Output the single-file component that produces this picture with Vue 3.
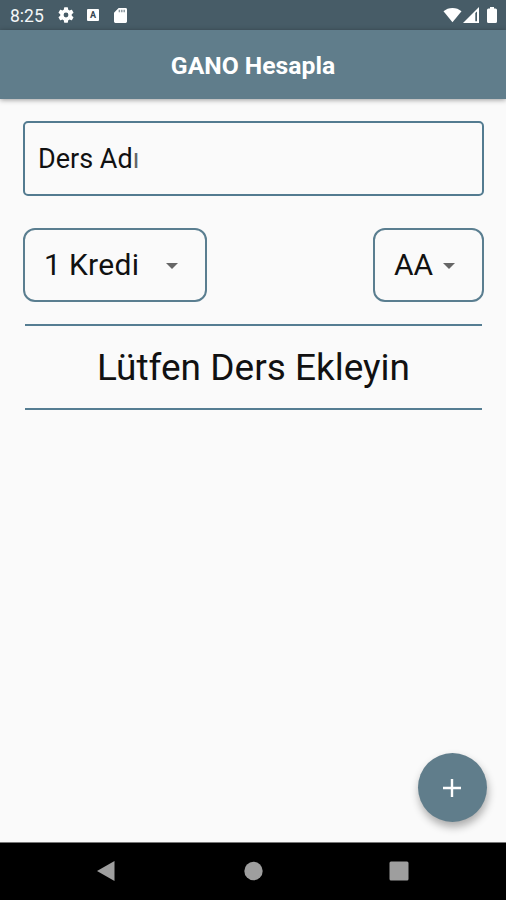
<script setup>
const credit = '1 Kredi'
const grade = 'AA'
</script>

<template>
  <div class="screen">
    <header class="status">
      <span class="time">8:25</span>
      <svg class="gear" viewBox="2 2 20 20"><path fill-rule="evenodd" d="M19.14 12.94c.04-.3.06-.61.06-.94 0-.32-.02-.64-.07-.94l2.03-1.58a.49.49 0 0 0 .12-.61l-1.92-3.32a.49.49 0 0 0-.59-.22l-2.39.96c-.5-.38-1.03-.7-1.62-.94l-.36-2.54a.48.48 0 0 0-.48-.41h-3.84a.48.48 0 0 0-.47.41l-.36 2.54c-.59.24-1.13.57-1.62.94l-2.39-.96a.48.48 0 0 0-.59.22L2.74 8.87a.48.48 0 0 0 .12.61l2.03 1.58c-.05.3-.09.63-.09.94s.02.64.07.94l-2.03 1.58a.49.49 0 0 0-.12.61l1.92 3.32c.12.22.37.29.59.22l2.39-.96c.5.38 1.03.7 1.62.94l.36 2.54c.05.24.24.41.48.41h3.84c.24 0 .44-.17.47-.41l.36-2.54c.59-.24 1.13-.56 1.62-.94l2.39.96c.22.08.47 0 .59-.22l1.92-3.32a.48.48 0 0 0-.12-.61zM12 15a3 3 0 1 1 0-6 3 3 0 0 1 0 6z" /></svg>
      <span class="badge">A</span>
      <svg class="sd" viewBox="0 0 14 16"><path fill-rule="evenodd" d="M5 0h7.500a1.500 1.500 0 0 1 1.500 1.500v13a1.500 1.500 0 0 1-1.500 1.500h-11A1.500 1.500 0 0 1 0 14.500V5z" /><path class="pins" d="M5 1.800h1.600v2.600H5zM7.600 1.800h1.600v2.600H7.600zM10.200 1.800h1.600v2.600h-1.600z" /></svg>
      <span class="spacer"></span>
      <svg class="wifi" viewBox="0 0 20 16"><path d="M10 15.500 .5 4C3 1.700 6.500.500 10 .500s7 1.200 9.500 3.500z" /></svg>
      <svg class="signal" viewBox="0 0 16 16"><path fill-rule="evenodd" d="M16 0v16H0zM12.300 6v8.300h1.700V4.400z" /></svg>
      <svg class="battery" viewBox="0 0 10 16"><path d="M3 0h4v1.500h1.500A1.500 1.500 0 0 1 10 3v11.500A1.500 1.500 0 0 1 8.500 16h-7A1.500 1.500 0 0 1 0 14.500V3a1.500 1.500 0 0 1 1.500-1.500H3z" /></svg>
    </header>
    <div class="appbar"><h1>GANO Hesapla</h1></div>
    <main>
      <div class="field"><span>Ders Ad<span class="faint">ı</span></span></div>
      <div class="row">
        <div class="select wide"><span>{{ credit }}</span><i class="caret"></i></div>
        <div class="select"><span>{{ grade }}</span><i class="caret"></i></div>
      </div>
      <div class="empty"><span>Lütfen Ders Ekleyin</span></div>
      <button class="fab" aria-label="Ekle">
        <svg viewBox="0 0 18 18"><path d="M7.800 0h2.400v7.800H18v2.400h-7.800V18H7.800v-7.800H0V7.800h7.800z" /></svg>
      </button>
    </main>
    <nav>
      <svg viewBox="0 0 20 22"><path d="M18.500 1v20L1 11z" /></svg>
      <svg viewBox="0 0 20 22"><circle cx="10.500" cy="11" r="9.200" /></svg>
      <svg viewBox="0 0 20 22"><rect x=".5" y="1.500" width="19" height="19" rx="1.500" /></svg>
    </nav>
  </div>
</template>

<style>
body { margin: 0; background: #fafafa; }
</style>

<style scoped>
.screen { width: 506px; height: 900px; display: flex; flex-direction: column; background: #fafafa; color: #111; font-family: Roboto, sans-serif; overflow: hidden; }
.status { height: 30px; flex: none; box-sizing: border-box; padding: 0 9px 0 10px; display: flex; align-items: center; background: #475c67; color: #f4f7f8; }
.status svg { fill: #fff; display: block; }
.status .pins { fill: #8b989f; }
.time { width: 48px; font-size: 17.500px; line-height: 30px; padding-top: 1px; }
.gear { width: 16px; height: 16px; }
.badge { width: 12px; height: 12px; margin-left: 13px; border-radius: 1px; background: #fff; color: #34464f; font: bold 9px/12px Roboto, sans-serif; text-align: center; }
.sd { width: 13px; height: 15px; margin-left: 15px; }
.spacer { flex: 1; }
.wifi { width: 19px; height: 16px; }
.signal { width: 16px; height: 16px; margin-left: 1px; }
.battery { width: 10px; height: 16px; margin-left: 8px; }
.appbar { position: relative; height: 69px; flex: none; display: flex; align-items: center; justify-content: center; background: #607d8b; box-shadow: 0 1px 5px rgba(0, 0, 0, .38); }
h1 { margin: 0; padding-top: 2px; font-size: 24.700px; font-weight: 700; line-height: 32px; color: #fff; white-space: nowrap; }
main { flex: 1; min-height: 0; box-sizing: border-box; padding: 22px 22px 0 23px; display: flex; flex-direction: column; }
.field { height: 75px; box-sizing: border-box; border: 2px solid #537b90; border-radius: 5px; padding: 0 13px; display: flex; align-items: center; font-size: 27px; }
.faint { color: #666; }
.row { margin-top: 32px; display: flex; justify-content: space-between; }
.select { width: 111px; height: 74px; box-sizing: border-box; border: 2px solid #5a7e90; border-radius: 12px; padding: 0 27px 1px 19px; display: flex; align-items: center; justify-content: space-between; font-size: 30px; white-space: nowrap; }
.wide { width: 184px; letter-spacing: .3px; }
.caret { width: 0; height: 0; margin-top: 2px; border: 6px solid transparent; border-top-color: #666; border-bottom: 0; }
.empty { height: 86px; margin: 22px 2px 0; box-sizing: border-box; border: solid #557d92; border-width: 2px 0; display: flex; align-items: center; justify-content: center; font-size: 37px; white-space: nowrap; }
.fab { width: 69px; height: 69px; margin: auto -3px 20px auto; padding: 0; border: 0; border-radius: 50%; background: #607d8b; display: flex; align-items: center; justify-content: center; box-shadow: 1px 5px 9px rgba(0, 0, 0, .32); }
.fab svg { width: 18px; height: 18px; margin-right: 1px; fill: #fff; }
nav { height: 58px; flex: none; border-top: 1px solid #777; box-sizing: border-box; padding: 0 97px 1px 96px; display: flex; align-items: center; justify-content: space-between; background: #000; }
nav svg { width: 20px; height: 22px; fill: #9e9e9e; }
</style>
